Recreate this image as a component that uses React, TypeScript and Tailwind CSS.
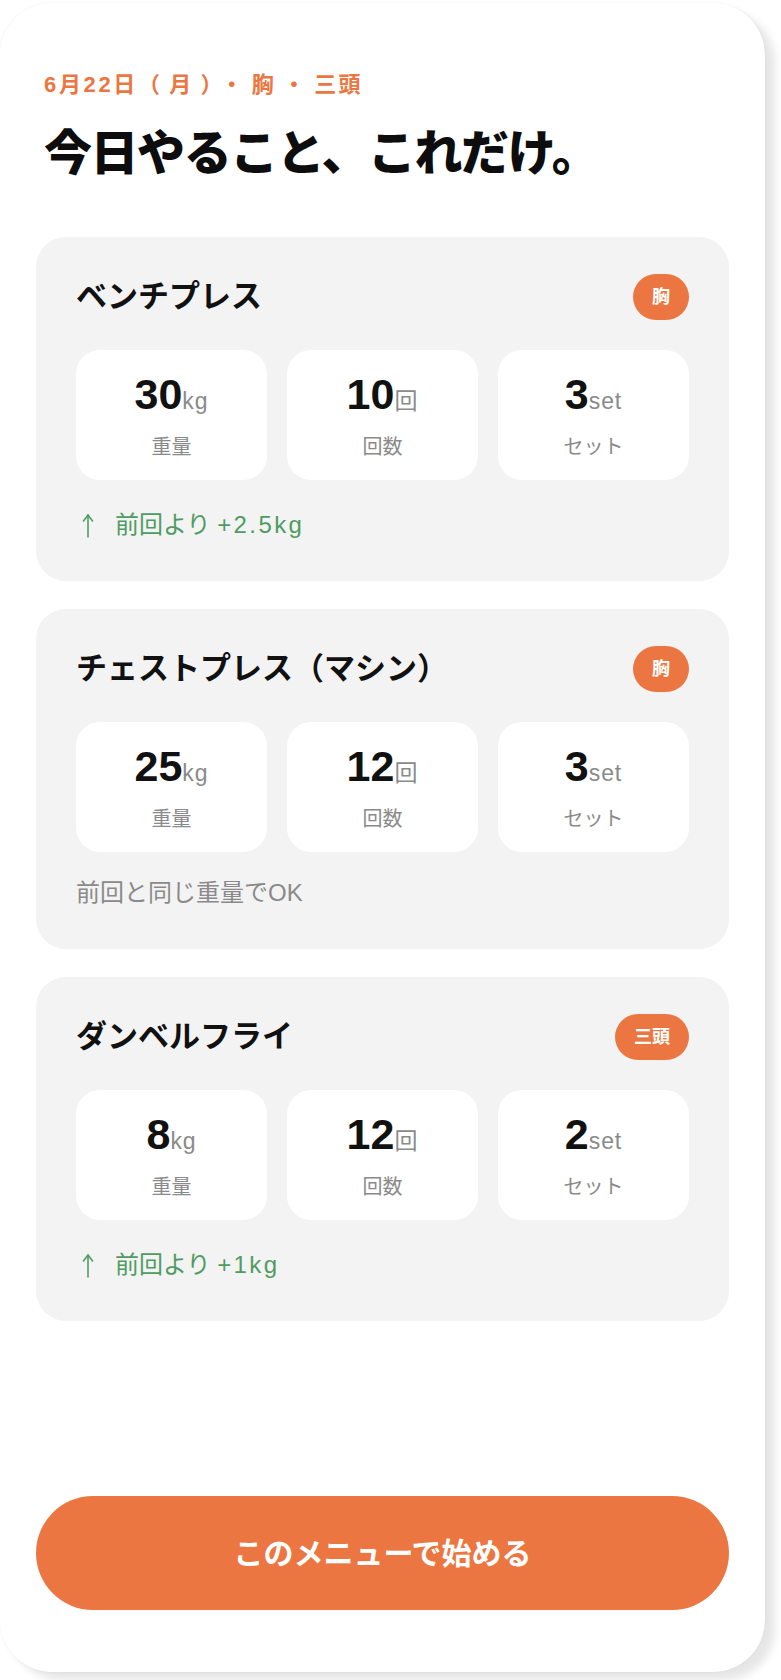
type Stat = { value: string; unit: string; label: string };

type Exercise = {
  name: string;
  tag: string;
  stats: Stat[];
  note: [string, string];
  up: boolean;
};

const EXERCISES: Exercise[] = [
  {
    name: 'ベンチプレス',
    tag: '胸',
    stats: [
      { value: '30', unit: 'kg', label: '重量' },
      { value: '10', unit: '回', label: '回数' },
      { value: '3', unit: 'set', label: 'セット' },
    ],
    note: ['前回より ', '+2.5kg'],
    up: true,
  },
  {
    name: 'チェストプレス（マシン）',
    tag: '胸',
    stats: [
      { value: '25', unit: 'kg', label: '重量' },
      { value: '12', unit: '回', label: '回数' },
      { value: '3', unit: 'set', label: 'セット' },
    ],
    note: ['前回と同じ重量で', 'OK'],
    up: false,
  },
  {
    name: 'ダンベルフライ',
    tag: '三頭',
    stats: [
      { value: '8', unit: 'kg', label: '重量' },
      { value: '12', unit: '回', label: '回数' },
      { value: '2', unit: 'set', label: 'セット' },
    ],
    note: ['前回より ', '+1kg'],
    up: true,
  },
];

function UpArrow() {
  return (
    <svg width="12" height="25" viewBox="0 0 12 25" fill="none" stroke="currentColor" strokeWidth="1.6" strokeLinecap="round" strokeLinejoin="round" className="ml-[6px] mr-[21px]">
      <line x1="6" y1="2" x2="6" y2="24" />
      <polyline points="1.5,8 6,2 10.5,8" />
    </svg>
  );
}

function StatBox({ stat }: { stat: Stat }) {
  return (
    <div className="flex h-[130px] flex-col items-center justify-center rounded-[24px] bg-white">
      <div className="flex items-baseline leading-[48px]">
        <span className="text-[43px] font-bold text-[#111]">{stat.value}</span>
        <span className="text-[23px] tracking-[0.04em] text-[#8a8a8a]">{stat.unit}</span>
      </div>
      <div className="mt-[9px] text-[20px] leading-[26px] text-[#8a8a8a]">{stat.label}</div>
    </div>
  );
}

function ExerciseCard({ ex }: { ex: Exercise }) {
  return (
    <div className="rounded-[30px] bg-[#f3f3f3] px-[40px] pt-[37px] pb-[40px]">
      <div className="flex h-[46px] items-center justify-between">
        <h2 className="text-[31px] font-bold leading-[40px] text-[#111]">{ex.name}</h2>
        <span className="flex h-[46px] items-center rounded-full bg-[#ec7641] px-[19px] text-[18px] font-bold text-white">
          {ex.tag}
        </span>
      </div>

      <div className="mt-[30px] grid grid-cols-3 gap-[20px]">
        {ex.stats.map(s => (
          <StatBox key={s.label} stat={s} />
        ))}
      </div>

      {ex.up ? (
        <div className="mt-[29px] flex items-center text-[24px] leading-[32px] text-[#4f9c62]">
          <UpArrow />
          <span className="whitespace-pre">{ex.note[0]}</span>
          <span className="tracking-[0.1em]">{ex.note[1]}</span>
        </div>
      ) : (
        <div className="mt-[25px] text-[24px] leading-[32px] text-[#8a8a8a]">
          {ex.note[0]}
          {ex.note[1]}
        </div>
      )}
    </div>
  );
}

export default function App() {
  return (
    <div
      className="min-h-[1680px] bg-white pt-[3px]"
      style={{ fontFamily: '"Liberation Sans", "Noto Sans CJK JP", sans-serif' }}
    >
      <div className="flex h-[1669px] w-[765px] flex-col rounded-[52px] bg-white px-[36px] pt-[67px] shadow-[10px_8px_8px_rgba(0,0,0,0.1),0_0_3px_rgba(0,0,0,0.06)]">
        {/* Header */}
        <div className="px-[8px]">
          <p className="text-[22px] font-semibold leading-[30px] text-[#ec7641]">
            <span className="tracking-[0.12em]">6月22日</span>
            <span className="tracking-[0.42em]">（月）・胸・</span>
            <span className="tracking-[0.1em]">三頭</span>
          </p>
          <h1 className="mt-[24px] text-[48px] font-black leading-[60px] tracking-[-0.03em] text-[#0d0d0d]">
            今日やること、これだけ。
          </h1>
        </div>

        {/* Exercise cards */}
        <div className="mt-[53px] flex flex-col gap-[28px]">
          {EXERCISES.map(ex => (
            <ExerciseCard key={ex.name} ex={ex} />
          ))}
        </div>

        {/* Start button */}
        <div className="mt-auto pb-[62px]">
          <button className="flex h-[114px] w-full items-center justify-center rounded-full bg-[#ec7641] text-[30px] font-bold text-white">
            このメニューで始める
          </button>
        </div>
      </div>
    </div>
  );
}
